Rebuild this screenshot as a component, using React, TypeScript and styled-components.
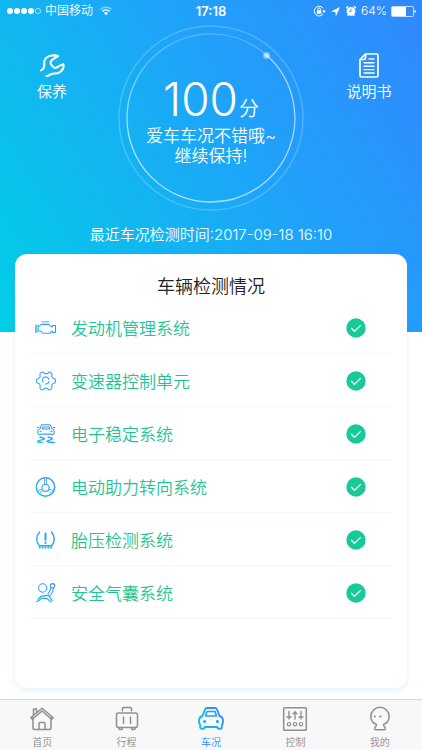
import React from "react";
import styled, { createGlobalStyle } from "styled-components";

const GlobalStyle = createGlobalStyle`
  * { box-sizing: border-box; }
  body {
    margin: 0;
    background: #fff;
    font-family: Inter, "Noto Sans CJK SC", sans-serif;
    font-weight: 350;
  }
  button, h1, h2, p, ul { margin: 0; padding: 0; }
  button { border: 0; background: none; font: inherit; color: inherit; cursor: pointer; }
  ul { list-style: none; }
  svg { display: block; }
`;

const Page = styled.div`
  min-height: 100vh;
  display: flex;
  flex-direction: column;
`;

const Hero = styled.header`
  height: 332px;
  color: #fff;
  background: linear-gradient(58deg, #00cfe6 0%, #21a0fa 62%, #3088ff 100%);
`;

const StatusBar = styled.div`
  height: 22px;
  padding: 0 6px;
  display: grid;
  grid-template-columns: 1fr auto 1fr;
  align-items: center;
  font-size: 12px;
  line-height: 22px;
`;

const StatusGroup = styled.div<{ $end?: boolean }>`
  display: flex;
  align-items: center;
  justify-content: ${(p) => (p.$end ? "flex-end" : "flex-start")};
  gap: ${(p) => (p.$end ? 4 : 3)}px;
`;

const Carrier = styled.span`
  margin-right: 4px;
`;

const Clock = styled.time`
  font-size: 13px;
  font-weight: 600;
`;

const HeroBody = styled.div`
  display: grid;
  grid-template-columns: 1fr 186px 1fr;
  padding-top: 3px;
`;

const Shortcut = styled.button`
  align-self: start;
  justify-self: center;
  width: 80px;
  margin-top: 28px;
  display: flex;
  flex-direction: column;
  align-items: center;
  gap: 4px;
  font-size: 15px;
  line-height: 20px;
`;

const LeftShortcut = styled(Shortcut)`
  margin-right: 14px;
`;

const RightShortcut = styled(Shortcut)`
  margin-left: 12px;
`;

const Gauge = styled.div`
  display: grid;
  width: 186px;
  height: 186px;
  > * { grid-area: 1 / 1; }
`;

const GaugeText = styled.div`
  padding-top: 47px;
  display: flex;
  flex-direction: column;
  align-items: center;
  font-size: 17px;
  line-height: 20px;
  text-align: center;
`;

const Score = styled.h1`
  height: 54px;
  display: flex;
  align-items: baseline;
  gap: 1px;
  font-size: 46px;
  line-height: 54px;
  font-weight: 300;
`;

const Unit = styled.span`
  font-size: 20px;
  line-height: 20px;
  font-weight: 350;
`;

const LastCheck = styled.p`
  margin-top: 13px;
  text-align: center;
  font-size: 15px;
  line-height: 22px;
`;

const Card = styled.main`
  flex: 1;
  margin: -78px 15px 11px;
  padding: 20px 15px 68px;
  background: #fff;
  border-radius: 12px;
  box-shadow: 0 2px 6px rgba(60, 160, 255, 0.16);
`;

const CardTitle = styled.h2`
  margin-bottom: 1px;
  font-size: 18px;
  line-height: 26px;
  font-weight: 350;
  color: #222;
  text-align: center;
`;

const Row = styled.li`
  height: 53px;
  padding: 1px 26px 0 5px;
  display: grid;
  grid-template-columns: 22px 1fr 20px;
  column-gap: 14px;
  align-items: center;
  border-bottom: 1px solid #f4f8fa;
  font-size: 17px;
  color: #1fc492;
`;

const TabBar = styled.nav`
  height: 51px;
  padding-top: 6px;
  display: grid;
  grid-template-columns: repeat(5, 1fr);
  background: #f8f8f8;
  border-top: 1px solid #d8d8d8;
`;

const Tab = styled.button<{ $active?: boolean }>`
  display: flex;
  flex-direction: column;
  align-items: center;
  gap: 3px;
  font-size: 10px;
  line-height: 14px;
  color: ${(p) => (p.$active ? "#2490ff" : "#8a8a8a")};
`;

const strokeProps = {
  fill: "none",
  strokeLinecap: "round" as const,
  strokeLinejoin: "round" as const,
};

const SignalDots = () => (
  <svg width="36" height="8" viewBox="0 0 36 8" aria-hidden="true">
    {[4, 11, 18, 25].map((x) => <circle key={x} cx={x} cy="4" r="3" fill="#fff" />)}
    <circle cx="32" cy="4" r="2.6" fill="none" stroke="#fff" strokeWidth="0.6" />
  </svg>
);

const Wifi = () => (
  <svg width="12" height="10" viewBox="0 0 12 10" aria-hidden="true">
    <path d="M.6 3.5a7.6 7.6 0 0 1 10.8 0" fill="none" stroke="#fff" strokeWidth="1.3" opacity=".45" />
    <path d="M2.5 5.4a5 5 0 0 1 7 0" fill="none" stroke="#fff" strokeWidth="1.5" />
    <path d="M4 7a2.8 2.8 0 0 1 4 0L6 9.2z" fill="#fff" />
  </svg>
);

const RotationLock = () => (
  <svg width="13" height="12" viewBox="0 0 13 12" aria-hidden="true">
    <path d="M10.3 3.4A4.9 4.9 0 1 0 10 9.2M11 5v2.2" fill="none" stroke="#fff" strokeWidth="1" />
    <path d="M9.3 5.8h3.4L11 8z" fill="#fff" />
    <rect x="3.8" y="5.3" width="4.6" height="3.5" fill="#fff" />
    <path d="M4.8 5.3V4.2a1.3 1.3 0 0 1 2.6 0v1.1" fill="none" stroke="#fff" strokeWidth=".9" />
  </svg>
);

const LocationArrow = () => (
  <svg width="11" height="11" viewBox="0 0 11 11" aria-hidden="true">
    <path d="M10 1 1 5.6l4.4.3.4 4.5z" fill="#fff" />
  </svg>
);

const Alarm = () => (
  <svg width="12" height="12" viewBox="0 0 12 12" aria-hidden="true">
    <circle cx="6" cy="6.4" r="4.4" fill="#fff" />
    <path d="M1.1 3.3 3.3 1.2M10.9 3.3 8.7 1.2M2.7 10.8l1-1.2M9.3 10.8l-1-1.2" stroke="#fff" strokeWidth="1.4" />
    <path d="M6 3.8v2.8H3.9" fill="none" stroke="#2997fc" strokeWidth=".9" />
  </svg>
);

const Battery = () => (
  <svg width="25" height="11" viewBox="0 0 25 11" aria-hidden="true">
    <rect x=".5" y=".5" width="22" height="10" rx="1" fill="none" stroke="#fff" strokeOpacity=".7" />
    <rect x="1" y="1" width="14" height="9" fill="#fff" />
    <path d="M23.5 3.8q1.3.3 1.3 1.7t-1.3 1.7z" fill="#fff" />
  </svg>
);

const Wrench = () => (
  <svg width="26" height="25" viewBox="0 0 26 25" stroke="#fff" strokeWidth="2.1" {...strokeProps} aria-hidden="true">
    <path d="M2 17.400C4.800 16 5.600 14.500 5.200 11.500 4.800 7.500 7 3.600 11.500 2.700 14 2.200 17 2.200 19 3.200 17 4.800 12.500 6 11.700 9 11.200 11 12 12.200 13.500 13.200 14.500 14.500 15.500 15.500 17.200 14.800 19.500 13.800 21.500 11.600 24.300 11.300 25.200 14.500 23.500 17.300 20.500 19.300 17.500 21.200 15 19.800 12 21.200 10.500 22 9.500 23.200 7.500 23.300" />
  </svg>
);

const Manual = () => (
  <svg width="20" height="25" viewBox="0 0 20 25" stroke="#fff" strokeWidth="1.700" {...strokeProps} aria-hidden="true">
    <path d="M6.500 1h11a1.500 1.500 0 0 1 1.500 1.500v20a1.500 1.500 0 0 1-1.500 1.500h-15A1.500 1.500 0 0 1 1 22.500V6.500zM1 6.500h4a1.500 1.500 0 0 0 1.500-1.500V1" />
    <path d="M10 6h5M5 9.800h10M5 13.200h10M5 16.600h10M5 20h10" strokeWidth="1.400" />
  </svg>
);

const GaugeRings = () => (
  <svg viewBox="0 0 186 186" fill="none" stroke="#fff" aria-hidden="true">
    <defs>
      <linearGradient id="fadeLeft" x1="0" y1="0" x2="0" y2="1">
        <stop offset="0" stopColor="#fff" stopOpacity=".2" />
        <stop offset=".6" stopColor="#fff" stopOpacity=".65" />
        <stop offset="1" stopColor="#fff" stopOpacity=".65" />
      </linearGradient>
    </defs>
    <circle cx="93" cy="93" r="92" strokeOpacity=".22" strokeWidth="1.400" />
    <path d="M93 9a84 84 0 0 1 56 21.500" strokeOpacity=".25" strokeWidth="1.200" />
    <path d="M149 30.500A84 84 0 0 1 93 177" strokeOpacity=".6" strokeWidth="1.300" />
    <path d="M93 177A84 84 0 0 1 93 9" stroke="url(#fadeLeft)" strokeWidth="1.300" />
    <circle cx="148.500" cy="30.500" r="3.800" fill="#fff" fillOpacity=".3" stroke="none" />
    <circle cx="148.500" cy="30.500" r="2.400" fill="#fff" fillOpacity=".55" stroke="none" />
  </svg>
);

const Check = () => (
  <svg width="20" height="20" viewBox="0 0 20 20" role="img" aria-label="正常">
    <circle cx="10" cy="10" r="9.700" fill="#17cb98" />
    <path d="m5.200 10 3.300 3.400 6.300-6.300" fill="none" stroke="#fff" strokeWidth="1.300" />
  </svg>
);

const SystemIcon = ({ children }: { children: React.ReactNode }) => (
  <svg width="22" height="22" viewBox="0 0 22 22" stroke="url(#blueTint)" strokeWidth="1.100" {...strokeProps} aria-hidden="true">
    {children}
  </svg>
);

const Tints = () => (
  <svg width="0" height="0" aria-hidden="true">
    <defs>
      <linearGradient id="blueTint" gradientUnits="userSpaceOnUse" x1="1" y1="21" x2="21" y2="1">
        <stop offset="0" stopColor="#20c4ea" />
        <stop offset="1" stopColor="#4387f5" />
      </linearGradient>
      <linearGradient id="carTint" gradientUnits="userSpaceOnUse" x1="1" y1="22" x2="26" y2="3">
        <stop offset="0" stopColor="#12c6e8" />
        <stop offset="1" stopColor="#2e88ff" />
      </linearGradient>
    </defs>
  </svg>
);

const systems = [
  {
    name: "发动机管理系统",
    icon: (
      <>
        <path d="M.8 8v7.500M3 8v7M3 9.300h1.500L6 7.500h8l2 2.200h1.500V8.500h3v7h-3v-1.200h-1l-1.800 2H7.500L5.800 14H3" />
        <path d="M1.500 8.200v6.800" strokeWidth="1.600" opacity=".5" />
        <path d="M7 4.500h7M7 6h7" strokeWidth="1.200" opacity=".6" />
      </>
    ),
  },
  {
    name: "变速器控制单元",
    icon: (
      <>
        <path d="M7 2.200c.8-.5 1.500-.1 2 .6 1 1.300 3.200 1.300 4.200 0 .5-.7 1.200-1.100 2-.6l1.300.9c.7.500.7 1.200.4 2-.6 1.600.4 3.200 2.100 3.400.9.100 1.400.7 1.400 1.500v1.800c0 .9-.5 1.400-1.400 1.500-1.700.3-2.700 1.900-2.100 3.500.3.800.3 1.500-.4 2l-1.500.9c-.8.5-1.500.1-2-.6-1-1.300-3-1.300-4 0-.5.700-1.200 1.100-2 .6l-1.500-.9c-.7-.5-.8-1.200-.5-2 .6-1.600-.3-3.200-2-3.500-.9-.1-1.400-.6-1.400-1.500v-1.800c0-.8.5-1.400 1.400-1.500 1.700-.2 2.600-1.800 2-3.400-.3-.8-.2-1.500.5-2z" />
        <path d="M8.100 12a3.200 3.200 0 1 1 5.700-2.500M13.800 11.500a3 3 0 0 1-3.300 2.500" />
      </>
    ),
  },
  {
    name: "电子稳定系统",
    icon: (
      <>
        <path d="M5 5.800 6.300 2.800C6.600 2 7 1.800 7.800 1.800h6.400c.8 0 1.200.2 1.500 1L17 5.800c1.500.4 2.300 1.300 2.300 2.800 0 1.200-.3 2-.8 2.500-.5 1-2 1-2.500 0H6c-.5 1-2 1-2.500 0-.5-.5-.8-1.300-.8-2.500 0-1.500.8-2.400 2.300-2.800zM7.300 6 8 4h6l.7 2zM2.300 4.500h1.200M18.500 4.500h1.200" />
        <path d="M5.300 8.500h.4M16.300 8.500h.4" strokeWidth="1.500" />
        <path d="M5 14.200c2.200.2 5 1 4.200 1.900-1 1-6.200 1.200-6.800 2.200-.4.900 3 .9 4.800 1.300M13 14.200c2.200.2 5 1 4.200 1.900-1 1-4.700 1.200-5.200 2.200-.3.900 5 .9 7.500 1.300" strokeWidth="1.400" />
      </>
    ),
  },
  {
    name: "电动助力转向系统",
    icon: (
      <>
        <circle cx="10.500" cy="11" r="9.200" strokeWidth="1.500" />
        <circle cx="10.500" cy="11.800" r="3.600" />
        <path d="M9.500 2.500v6M11.500 2.500v6M2.800 14.500l4.300-1.400M18.200 14.500l-4.300-1.400M5 17.200l2.700-2.800M16 17.200l-2.700-2.800" strokeWidth=".8" />
      </>
    ),
  },
  {
    name: "胎压检测系统",
    icon: (
      <>
        <path d="M4.500 3C1.300 7 .5 12.500 4.300 16.700h12.400C20.500 12.500 19.700 7 16.500 3" strokeWidth="1.400" />
        <path d="M10.500 4.500v6.500M10.500 13.800v.3" strokeWidth="2" />
        <path d="M3.800 18.300h13.500" strokeWidth="2.200" strokeDasharray="1.900 1" strokeLinecap="butt" />
      </>
    ),
  },
  {
    name: "安全气囊系统",
    icon: (
      <>
        <circle cx="7.700" cy="6" r="4.200" />
        <circle cx="17.500" cy="3.800" r="2.200" />
        <path d="M16 5.800c-.8 2-1.500 4.500-3 6M18.500 6c-.5 3-1.500 5.500-3 7.500" />
        <path d="M1.800 19.500c2-.2 3.200-1.500 4.500-3.200h5.500l4.200 3.600M3 17.300l3.500-3.300c3 .6 5-.8 7-.8l3.700 5.300" strokeWidth="1.300" />
      </>
    ),
  },
];

const HomeIcon = () => (
  <>
    <path d="M4 11.500V22a1.500 1.500 0 0 0 1.500 1.500h15A1.500 1.500 0 0 0 22 22V11.500M1.800 11.800 13 2.200l11.200 9.600-1.500 1.500L13 5 3.300 13.300zM4.500 9V3h3v3.200" />
    <path d="M10 23.500v-6a1 1 0 0 1 1-1h4a1 1 0 0 1 1 1v6" />
  </>
);

const TripIcon = () => (
  <>
    <rect x="2.500" y="7" width="21" height="14.500" rx="2" />
    <path d="M8.500 4.800V2.500a1 1 0 0 1 1-1h7a1 1 0 0 1 1 1v2.300M9.500 11v6.500M16.500 11v6.500M5 21.500v1a1 1 0 0 0 1 1h2v-2M18 21.500v2h2a1 1 0 0 0 1-1v-1" />
  </>
);

const CarIcon = () => (
  <g stroke="url(#carTint)" strokeWidth="1.900">
    <path d="M4.500 10 7 3.500C7.400 2.300 8 2 9 2h8c1 0 1.600.3 2 1.500L21.500 10c2.500.7 3.500 2.500 3.500 5 0 2-.4 3.200-1.200 4.200V21c0 2.500-4 2.500-4.500 0H6.700C6.200 23.500 2.200 23.500 2.200 21v-1.800C1.400 18.200 1 17 1 15c0-2.500 1-4.300 3.500-5z" />
    <path d="M7.500 10 9 5.500h8l1.500 4.500z" strokeWidth="1.600" />
    <path d="M6.500 15.500h.1M19.400 15.500h.1" strokeWidth="3" />
  </g>
);

const ControlIcon = () => (
  <>
    <rect x="1.700" y="1.700" width="22.600" height="22.600" rx=".8" />
    <path d="M7 5.500v7.500M5 11h4M13 5.500V13M11 7.800l2-1.500 2 1.500M19 5.500v7.500M17 11h4" strokeWidth="1.400" />
    <circle cx="7" cy="18.200" r="1.700" strokeWidth="1.200" />
    <circle cx="13" cy="18.200" r="1.700" strokeWidth="1.200" />
    <circle cx="19" cy="18.200" r="1.700" strokeWidth="1.200" />
  </>
);

const ProfileIcon = () => (
  <>
    <path d="M9.500 18.500C5.800 17 3.800 14 3.800 10.500a9.200 9.200 0 0 1 18.400 0c0 3.500-2 6.500-5.700 8 .2 1.500.8 2.300 1.600 3 .8 1 .2 2.300-1 2.300H8.900c-1.200 0-1.800-1.300-1-2.300.8-.7 1.400-1.500 1.600-3z" />
    <path d="M7.700 10.500h.1M13.200 10.500h.1" strokeWidth="2.200" />
  </>
);

const tabs = [
  { label: "首页", Icon: HomeIcon },
  { label: "行程", Icon: TripIcon },
  { label: "车况", Icon: CarIcon, active: true },
  { label: "控制", Icon: ControlIcon },
  { label: "我的", Icon: ProfileIcon },
];

const TabGlyph = ({ children }: { children: React.ReactNode }) => (
  <svg width="26" height="26" viewBox="0 0 26 26" stroke="#8f8f8f" strokeWidth="1.500" {...strokeProps} aria-hidden="true">
    {children}
  </svg>
);

export default function App() {
  return (
    <Page>
      <GlobalStyle />
      <Hero>
        <StatusBar>
          <StatusGroup>
            <SignalDots />
            <Carrier>中国移动</Carrier>
            <Wifi />
          </StatusGroup>
          <Clock>17:18</Clock>
          <StatusGroup $end>
            <RotationLock />
            <LocationArrow />
            <Alarm />
            <span>64%</span>
            <Battery />
          </StatusGroup>
        </StatusBar>
        <HeroBody>
          <LeftShortcut type="button">
            <Wrench />
            保养
          </LeftShortcut>
          <Gauge>
            <GaugeRings />
            <GaugeText>
              <Score>
                100<Unit>分</Unit>
              </Score>
              <p>爱车车况不错哦~</p>
              <p>继续保持!</p>
            </GaugeText>
          </Gauge>
          <RightShortcut type="button">
            <Manual />
            说明书
          </RightShortcut>
        </HeroBody>
        <LastCheck>最近车况检测时间:2017-09-18 16:10</LastCheck>
      </Hero>
      <Card>
        <CardTitle>车辆检测情况</CardTitle>
        <ul>
          {systems.map((s) => (
            <Row key={s.name}>
              <SystemIcon>{s.icon}</SystemIcon>
              <span>{s.name}</span>
              <Check />
            </Row>
          ))}
        </ul>
      </Card>
      <TabBar>
        {tabs.map(({ label, Icon, active }) => (
          <Tab key={label} type="button" $active={active} aria-current={active ? "page" : undefined}>
            <TabGlyph>
              <Icon />
            </TabGlyph>
            {label}
          </Tab>
        ))}
      </TabBar>
      <Tints />
    </Page>
  );
}
